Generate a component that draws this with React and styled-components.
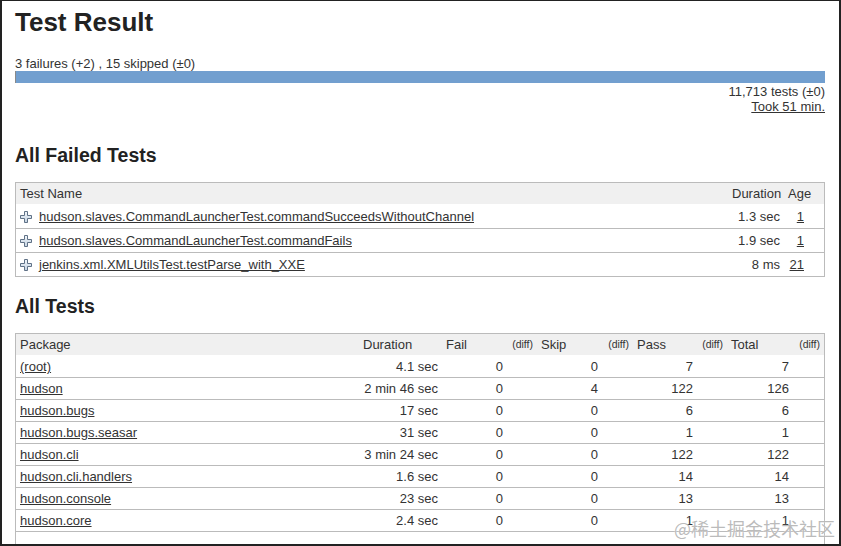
import React from "react";
import styled, { createGlobalStyle } from "styled-components";

const Global = createGlobalStyle`
  html, body { margin: 0; padding: 0; background: #fff; }
  body { font-family: "Liberation Sans", Arial, sans-serif; color: #333; }
`;

const Frame = styled.div`
  position: relative;
  box-sizing: border-box;
  width: 841px;
  height: 546px;
  overflow: hidden;
  border-style: solid;
  border-color: #222;
  border-width: 1px 2px 2px 2px;
  padding: 0 14px 0 13px;
  background: #fff;
`;

const Title = styled.h1`
  margin: 6px 0 0;
  font-size: 26px;
  line-height: 30px;
  font-weight: bold;
  color: #222;
`;

const Summary = styled.div`
  margin-top: 19px;
  font-size: 13px;
  line-height: 15px;
`;

const Bar = styled.div`
  display: flex;
  height: 12px;
  background: #729fcf;
`;

const BarPart = styled.div`
  height: 100%;
  flex: none;
  background: ${(p) => p.$color};
`;

const RightInfo = styled.div`
  margin-top: 1px;
  text-align: right;
  font-size: 13px;
  line-height: 15px;
`;

const Link = styled.a`
  color: #333;
  text-decoration: underline;
`;

const Heading = styled.h2`
  margin: ${(p) => p.$top}px 0 0;
  font-size: 19.5px;
  line-height: 22px;
  font-weight: bold;
  color: #222;
`;

const Table = styled.table`
  margin-top: ${(p) => p.$top}px;
  width: 100%;
  table-layout: fixed;
  border-collapse: separate;
  border-spacing: 0;
  border: 1px solid #bbb;
  font-size: 13px;
`;

const Th = styled.th`
  background: #f0f0f0;
  font-weight: normal;
  text-align: ${(p) => p.$align || "left"};
  padding: 0 4px;
  line-height: 21px;
  height: 21px;
  color: #333;
  white-space: nowrap;
  font-size: ${(p) => (p.$small ? "10.5px" : "13px")};
`;

const Td = styled.td`
  text-align: ${(p) => p.$align || "left"};
  padding: 0 ${(p) => p.$padRight || 4}px 0 4px;
  line-height: ${(p) => p.$lh || 21}px;
  height: ${(p) => p.$lh || 21}px;
  border-top: 1px solid #bbb;
  white-space: nowrap;
  overflow: hidden;
  color: #333;
  vertical-align: middle;
  tr:first-child > & { border-top-color: transparent; }
`;

const NameCell = styled.div`
  display: flex;
  align-items: center;
  gap: 7px;
  height: 23px;
  svg { display: block; flex: none; }
`;

const Watermark = styled.div`
  position: absolute;
  right: 4px;
  bottom: 4px;
  font-family: "Noto Sans CJK SC", sans-serif;
  font-size: 18px;
  line-height: 24px;
  color: rgba(175, 175, 175, 0.85);
  text-shadow: 0 0 1px #fff;
  pointer-events: none;
`;

const PlusIcon = () => (
  <svg width="12" height="12" viewBox="0 0 12 12">
    <defs>
      <linearGradient id="pg" x1="0" y1="0" x2="0" y2="1">
        <stop offset="0" stopColor="#f2f6fa" />
        <stop offset="1" stopColor="#c4d3e2" />
      </linearGradient>
    </defs>
    <path
      d="M4.5 0.5H7.5V4.5H11.5V7.5H7.5V11.5H4.5V7.5H0.5V4.5H4.5Z"
      fill="url(#pg)"
      stroke="#5f7186"
      strokeWidth="1"
    />
  </svg>
);

const failed = [
  { name: "hudson.slaves.CommandLauncherTest.commandSucceedsWithoutChannel", dur: "1.3 sec", age: "1" },
  { name: "hudson.slaves.CommandLauncherTest.commandFails", dur: "1.9 sec", age: "1" },
  { name: "jenkins.xml.XMLUtilsTest.testParse_with_XXE", dur: "8 ms", age: "21" },
];

const packages = [
  ["(root)", "4.1 sec", 0, 0, 7, 7],
  ["hudson", "2 min 46 sec", 0, 4, 122, 126],
  ["hudson.bugs", "17 sec", 0, 0, 6, 6],
  ["hudson.bugs.seasar", "31 sec", 0, 0, 1, 1],
  ["hudson.cli", "3 min 24 sec", 0, 0, 122, 122],
  ["hudson.cli.handlers", "1.6 sec", 0, 0, 14, 14],
  ["hudson.console", "23 sec", 0, 0, 13, 13],
  ["hudson.core", "2.4 sec", 0, 0, 1, 1],
];

const total = 11713;
const barWidth = 810;

export default function App() {
  return (
    <>
      <Global />
      <Frame>
        <Title>Test Result</Title>
        <Summary>3 failures (+2) , 15 skipped (±0)</Summary>
        <Bar>
          <BarPart $color="#ef2929" style={{ width: (3 / total) * barWidth }} />
          <BarPart $color="#8a8a8a" style={{ width: 1 }} />
        </Bar>
        <RightInfo>
          11,713 tests (±0)
          <br />
          <Link href="#">Took 51 min.</Link>
        </RightInfo>

        <Heading $top={30}>All Failed Tests</Heading>
        <Table $top={16}>
          <colgroup>
            <col />
            <col style={{ width: 56 }} />
            <col style={{ width: 40 }} />
          </colgroup>
          <thead>
            <tr>
              <Th>Test Name</Th>
              <Th $align="right">Duration</Th>
              <Th>Age</Th>
            </tr>
          </thead>
          <tbody>
            {failed.map((f) => (
              <tr key={f.name}>
                <Td $lh={23}>
                  <NameCell>
                    <PlusIcon />
                    <Link href="#">{f.name}</Link>
                  </NameCell>
                </Td>
                <Td $lh={23} $align="right">{f.dur}</Td>
                <Td $lh={23} $align="right" $padRight={20}>
                  <Link href="#">{f.age}</Link>
                </Td>
              </tr>
            ))}
          </tbody>
        </Table>

        <Heading $top={18}>All Tests</Heading>
        <Table $top={16}>
          <colgroup>
            <col />
            <col style={{ width: 83 }} />
            <col style={{ width: 65 }} />
            <col style={{ width: 30 }} />
            <col style={{ width: 65 }} />
            <col style={{ width: 31 }} />
            <col style={{ width: 64 }} />
            <col style={{ width: 30 }} />
            <col style={{ width: 66 }} />
            <col style={{ width: 31 }} />
          </colgroup>
          <thead>
            <tr>
              <Th>Package</Th>
              <Th>Duration</Th>
              <Th>Fail</Th>
              <Th $small $align="right">(diff)</Th>
              <Th>Skip</Th>
              <Th $small $align="right">(diff)</Th>
              <Th>Pass</Th>
              <Th $small $align="right">(diff)</Th>
              <Th>Total</Th>
              <Th $small $align="right">(diff)</Th>
            </tr>
          </thead>
          <tbody>
            {packages.map(([name, dur, fail, skip, pass, tot]) => (
              <tr key={name}>
                <Td>
                  <Link href="#">{name}</Link>
                </Td>
                <Td $align="right">{dur}</Td>
                <Td $align="right">{fail}</Td>
                <Td />
                <Td $align="right">{skip}</Td>
                <Td />
                <Td $align="right">{pass}</Td>
                <Td />
                <Td $align="right">{tot}</Td>
                <Td />
              </tr>
            ))}
            <tr>
              {Array.from({ length: 10 }, (_, i) => (
                <Td key={i} />
              ))}
            </tr>
          </tbody>
        </Table>
        <Watermark>@稀土掘金技术社区</Watermark>
      </Frame>
    </>
  );
}
